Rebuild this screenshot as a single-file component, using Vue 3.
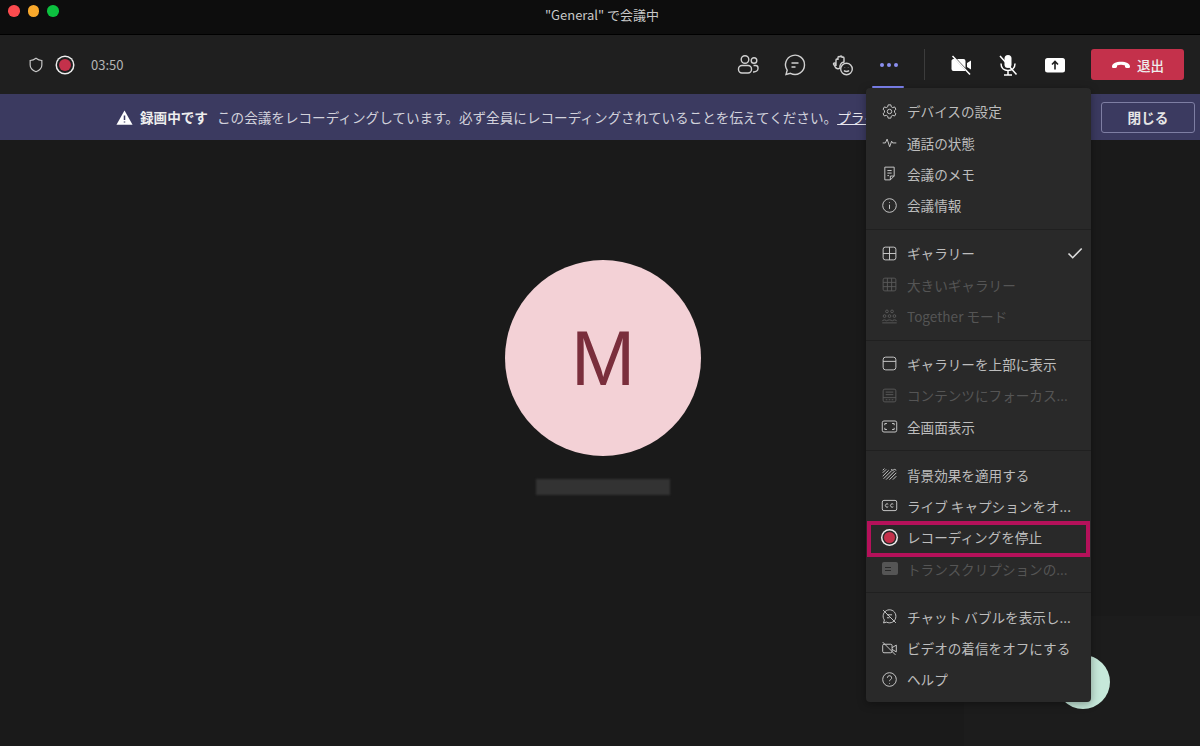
<script setup>
const ic = {
  gear: '<circle cx="10" cy="10" r="2.6"/><path d="M8.4 2.2h3.2l.5 2.3 1.7.9 2.2-.8 1.6 2.8-1.7 1.5v2.1l1.7 1.6-1.6 2.7-2.2-.8-1.7 1-.5 2.3H8.4l-.5-2.3-1.7-1-2.2.8-1.6-2.7 1.7-1.6V8.9L2.4 7.4 4 4.6l2.2.8 1.7-.9z"/>',
  pulse: '<path d="M2 10.5h3.2l2-4.5 3 9 2.3-6.5 1.2 2h4.3"/>',
  note: '<path d="M4.5 2.5h11v10.5l-4.5 4.5H4.5z"/><path d="M15.5 13H11v4.5M7.5 6.5h5M7.5 9.5h5M7.5 12.5h2"/>',
  info: '<circle cx="10" cy="10" r="8"/><path d="M10 9v5M10 6v.9"/>',
  gallery: '<rect x="2.5" y="2.5" width="15" height="15" rx="2.5"/><path d="M10 2.5v15M2.5 10h15"/>',
  large: '<rect x="2.5" y="2.5" width="15" height="15" rx="2"/><path d="M7.5 2.5v15M12.5 2.5v15M2.5 7.5h15M2.5 12.5h15"/>',
  together: '<circle cx="7" cy="4" r="1.6"/><circle cx="13" cy="4" r="1.6"/><circle cx="4.2" cy="9.5" r="1.6"/><circle cx="10" cy="9.5" r="1.6"/><circle cx="15.8" cy="9.5" r="1.6"/><path d="M1.5 15.5c0-2 5-2 5 0 0-2 6.800-2 6.800 0 0-2 5.200-2 5.200 0M1.500 17.500h17"/>',
  top: '<rect x="2.5" y="2.500" width="15" height="15" rx="3"/><path d="M2.500 7.500h15"/>',
  focus: '<rect x="2.500" y="2.500" width="15" height="15" rx="2"/><path d="M2.500 12.500h15M5.500 6h9M5.500 9h9M5.500 15h2M9 15h2M12.500 15h2"/>',
  full: '<rect x="1.500" y="3.500" width="17" height="13" rx="2"/><path d="M4.500 8.500v-2h2.500M13 6.500h2.500v2M15.500 11.500v2H13M7 13.500H4.500v-2"/>',
  bg: '<path d="M2 8l4-4M2 12l7-7M3 15l10-10M6 16l10-10M10 16l8-8M14 16l4-4M2 5l2-2M12 4l2 1 2-1 2 1"/>',
  cc: '<rect x="1.500" y="4" width="17" height="12" rx="2"/><path d="M8.500 8.500a2 2 0 1 0 0 3M14.500 8.500a2 2 0 1 0 0 3"/>',
  bubble: '<path d="M17.500 10a7.500 7.500 0 0 1-11 6.600l-3.500 1 1-3.500A7.500 7.500 0 1 1 17.500 10z"/><path d="M2.500 2.500l15 15M7 8h6M7 11.500h3"/>',
  video: '<rect x="2" y="5" width="11" height="10" rx="1.500"/><path d="M13 9l5-3v8l-5-3M2 2.500l15 15"/>',
  help: '<circle cx="10" cy="10" r="8"/><path d="M7.500 8a2.500 2.500 0 1 1 3.700 2.200c-.8.500-1.200 1-1.200 1.800M10 14.200v.8"/>'
}

const groups = [
  [
    { label: "デバイスの設定", icon: "gear" },
    { label: "通話の状態", icon: "pulse" },
    { label: "会議のメモ", icon: "note" },
    { label: "会議情報", icon: "info" }
  ],
  [
    { label: "ギャラリー", icon: "gallery", checked: true },
    { label: "大きいギャラリー", icon: "large", off: true },
    { label: "Together モード", icon: "together", off: true }
  ],
  [
    { label: "ギャラリーを上部に表示", icon: "top" },
    { label: "コンテンツにフォーカス...", icon: "focus", off: true },
    { label: "全画面表示", icon: "full" }
  ],
  [
    { label: "背景効果を適用する", icon: "bg" },
    { label: "ライブ キャプションをオ...", icon: "cc" },
    { label: "レコーディングを停止", rec: true },
    { label: "トランスクリプションの...", transcript: true, off: true }
  ],
  [
    { label: "チャット バブルを表示し...", icon: "bubble" },
    { label: "ビデオの着信をオフにする", icon: "video" },
    { label: "ヘルプ", icon: "help" }
  ]
]
</script>

<template>
  <div class="window">
    <header class="titlebar">
      <div class="lights">
        <span class="light red"></span>
        <span class="light yellow"></span>
        <span class="light green"></span>
      </div>
      <div class="title">"General" で会議中</div>
    </header>

    <div class="toolbar">
      <svg class="shield" viewBox="0 0 20 20" width="18" height="18">
        <path d="M10 2.500c2 1.500 4 2.300 6.500 2.500v5c0 3.500-2.500 6-6.500 7.500-4-1.500-6.500-4-6.500-7.500V5C6 4.800 8 4 10 2.500z" />
      </svg>
      <span class="rec-dot"></span>
      <span class="time">03:50</span>

      <div class="tools">
        <button class="tool">
          <svg viewBox="0 0 24 24" width="24" height="24">
            <circle cx="9" cy="6.500" r="3.800" /><circle cx="18" cy="7.500" r="2.800" />
            <rect x="2.500" y="12.500" width="13" height="7.500" rx="3.500" />
            <path d="M17.500 12.500h2.200a2.300 2.300 0 0 1 2.300 2.300v.7c0 2-2 3.500-4.500 3.500h-.5" />
          </svg>
        </button>
        <button class="tool">
          <svg viewBox="0 0 24 24" width="24" height="24">
            <path d="M21.500 12a9.500 9.500 0 0 1-14 8.300L3 21.500l1.200-4.400A9.500 9.500 0 1 1 21.500 12z" />
            <path d="M8.500 10h7M8.500 14h4" />
          </svg>
        </button>
        <button class="tool">
          <svg viewBox="0 0 24 24" width="24" height="24">
            <path d="M6 13V7a1 1 0 0 1 2 0V4.500a1 1 0 0 1 2 0V4a1 1 0 0 1 2 0v1a1 1 0 0 1 2 0v4c-3 .5-4.500 3-4 6-1 1-3.500 1-4.500-.5L3.500 11a1 1 0 0 1 1.500-1z" />
            <circle cx="16.500" cy="16" r="5.800" />
            <path d="M14 17.500c1.200 1.400 3.800 1.400 5 0M14.700 14.200v.3M18.300 14.200v.3" />
          </svg>
        </button>
        <button class="tool active">
          <span class="dots"><i></i><i></i><i></i></span>
        </button>
        <span class="divider"></span>
        <button class="tool solid">
          <svg viewBox="0 0 24 24" width="24" height="24">
            <path d="M2.500 7.500a2 2 0 0 1 2-1.500h1.200l10.800 11.500a2 2 0 0 1-1.500.5H4.500a2 2 0 0 1-2-2z M8 6h6.500a2 2 0 0 1 2 2v7z M18 10l4-2.500v9L18 14z" />
            <path class="cut" d="M3.500 3l17.500 18.500" />
          </svg>
        </button>
        <button class="tool solid">
          <svg viewBox="0 0 24 24" width="24" height="24">
            <rect x="8.500" y="2" width="7" height="13" rx="3.500" />
            <path class="cut" d="M5 10.500c0 4.500 3 7 7 7s7-2.500 7-7M12 17.500V22M8 22h8M4 3l16.500 18.500" />
          </svg>
        </button>
        <button class="tool solid">
          <svg viewBox="0 0 24 24" width="24" height="24">
            <rect x="2" y="5" width="20" height="14.500" rx="2.500" />
            <path class="dark" d="M12 16.500V9M9 11.500L12 8.500l3 3" />
          </svg>
        </button>
        <button class="leave">
          <svg viewBox="0 0 20 20" width="20" height="20">
            <path d="M1 11.500C1 8.500 5 6.800 10 6.800s9 1.700 9 4.700c0 1-.6 1.500-1.500 1.500h-2c-.9 0-1.500-.5-1.500-1.400v-1C12.700 10 11.400 9.800 10 9.800s-2.700.2-4 .8v1c0 .9-.6 1.400-1.500 1.400h-2C1.600 13 1 12.500 1 11.500z" />
          </svg>
          退出
        </button>
      </div>
    </div>

    <div class="banner">
      <svg class="warn" viewBox="0 0 20 20" width="17" height="17">
        <path d="M10 1.800L19.500 18.500H.5z" />
        <path class="mark" d="M10 7.500v5.500M10 14.600v1.400" />
      </svg>
      <strong>録画中です</strong>
      <span class="notice">
        この会議をレコーディングしています。必ず全員にレコーディングされていることを伝えてください。<a>プライバシー ポリシー</a>
      </span>
      <button class="close">閉じる</button>
    </div>

    <main class="stage">
      <div class="avatar">M</div>
      <div class="name"></div>
      <div class="side-panel"></div>
      <div class="fab"></div>
    </main>

    <div class="menu">
      <div v-for="(group, i) in groups" :key="i" class="group">
        <div
          v-for="item in group"
          :key="item.label"
          class="row"
          :class="{ off: item.off, marked: item.rec }"
        >
          <span v-if="item.rec" class="rec-dot small"></span>
          <span v-else-if="item.transcript" class="transcript"><i></i><i></i></span>
          <svg v-else class="row-icon" viewBox="0 0 20 20" width="17" height="17" v-html="ic[item.icon]"></svg>
          <span class="label">{{ item.label }}</span>
          <svg v-if="item.checked" class="check" viewBox="0 0 16 16" width="16" height="16">
            <path d="M1.500 8.500l4.200 4.200 9-9.200" />
          </svg>
        </div>
      </div>
    </div>
  </div>
</template>

<style scoped>
.window {
  position: relative;
  display: flex;
  flex-direction: column;
  width: 1200px;
  height: 746px;
  overflow: hidden;
  background: #1a1a1a;
  font-family: "Noto Sans CJK JP", "Liberation Sans", sans-serif;
  color: #d0d0d0;
}

.titlebar {
  position: relative;
  display: flex;
  flex: none;
  align-items: center;
  justify-content: center;
  height: 35px;
  padding: 0 0 5px 4px;
  box-sizing: border-box;
  background: #0d0d0d;
  border-bottom: 1px solid #000;
}
.title {
  font-size: 13px;
  color: #c8c8c8;
}
.lights {
  position: absolute;
  left: 8px;
  top: 5px;
  display: flex;
  gap: 8px;
}
.light {
  width: 11.500px;
  height: 11.500px;
  border-radius: 50%;
}
.red { background: #fb4b4e; }
.yellow { background: #f9a92c; }
.green { background: #0cc13f; }

.toolbar {
  display: flex;
  flex: none;
  align-items: center;
  height: 59px;
  padding: 0 16px 0 27px;
  box-sizing: border-box;
  background: #1f1f1f;
}
.shield {
  fill: none;
  stroke: #c8c8c8;
  stroke-width: 1.300;
}
.rec-dot {
  flex: none;
  width: 12px;
  height: 12px;
  margin-left: 14px;
  box-sizing: border-box;
  border-radius: 50%;
  background: #c4314b;
  box-shadow: 0 0 0 2px #1f1f1f, 0 0 0 3.500px #eee;
  margin-right: 0;
}
.time {
  margin-left: 20px;
  font-family: "Noto Sans CJK JP", "Liberation Sans", sans-serif;
  font-size: 13px;
  color: #b4b4b4;
}
.tools {
  display: flex;
  align-items: center;
  margin-left: auto;
}
.tool {
  position: relative;
  display: flex;
  align-items: center;
  justify-content: center;
  width: 47px;
  height: 46px;
  padding: 0;
  border: 0;
  background: none;
}
.tool svg {
  fill: none;
  stroke: #d0d0d0;
  stroke-width: 1.400;
}
.tool.solid svg {
  fill: #fff;
  stroke: none;
}
.tool.solid .cut {
  fill: none;
  stroke: #fff;
  stroke-width: 1.500;
}
.tool.solid .dark {
  fill: none;
  stroke: #1f1f1f;
  stroke-width: 1.600;
}
.tool.active::after {
  content: "";
  position: absolute;
  left: 7px;
  right: 8px;
  bottom: 0;
  height: 2px;
  background: #7f85f5;
  border-radius: 2px;
}
.dots {
  display: flex;
  gap: 3px;
}
.dots i {
  width: 4px;
  height: 4px;
  border-radius: 50%;
  background: #8b8ff0;
}
.divider {
  width: 1px;
  height: 31px;
  margin: 0 12px;
  background: #3c3c3c;
}
.leave {
  display: flex;
  align-items: center;
  justify-content: center;
  gap: 6px;
  width: 93px;
  height: 31px;
  margin-left: 13px;
  padding: 0;
  border: 0;
  border-radius: 3px;
  background: #c4314b;
  font: 500 13.500px "Noto Sans CJK JP", sans-serif;
  color: #eee;
}
.leave svg {
  fill: #fff;
}

.banner {
  display: flex;
  flex: none;
  align-items: center;
  height: 46px;
  padding: 0 5px 0 116px;
  box-sizing: border-box;
  background: #3b3a60;
  font-size: 13.600px;
  white-space: nowrap;
}
.warn {
  flex: none;
  fill: #fff;
}
.warn .mark {
  fill: none;
  stroke: #3b3a60;
  stroke-width: 1.800;
}
.banner strong {
  margin-left: 7px;
  font-weight: 700;
  color: #eee;
}
.notice {
  flex: 1;
  margin-left: 9px;
  overflow: hidden;
  color: #d2d2dc;
}
.notice a {
  color: #e6e6ee;
  text-decoration: underline;
}
.close {
  flex: none;
  width: 94px;
  height: 31px;
  padding: 0;
  border: 1px solid #7e7ea3;
  border-radius: 3px;
  background: none;
  font: 700 13.600px "Noto Sans CJK JP", sans-serif;
  color: #e6e6e6;
}

.stage {
  position: relative;
  flex: 1;
  display: flex;
  flex-direction: column;
  align-items: center;
  padding: 120px 0 0 6px;
  background: #1a1a1a;
}
.avatar {
  display: flex;
  align-items: center;
  justify-content: center;
  width: 196px;
  height: 196px;
  border-radius: 50%;
  background: #f3d1d6;
  font: 400 77px "Liberation Sans", sans-serif;
  color: #7a2e3c;
}
.name {
  width: 134px;
  height: 16px;
  margin-top: 23px;
  background: #333;
  filter: blur(1px);
}
.side-panel {
  position: absolute;
  left: 964px;
  right: 0;
  top: 476px;
  bottom: 0;
  background: #1c1c1c;
}
.fab {
  position: absolute;
  left: 1056px;
  top: 515px;
  width: 54px;
  height: 54px;
  border-radius: 50%;
  background: #c6e8da;
}

.menu {
  position: absolute;
  left: 866px;
  top: 88px;
  width: 225px;
  height: 614px;
  border-radius: 4px;
  background: #292929;
  box-shadow: 0 2px 8px rgba(0, 0, 0, 0.35);
}
.group {
  padding: 7.500px 0 8px;
  border-top: 1px solid #202020;
}
.group:first-child {
  border-top: 0;
}
.row {
  position: relative;
  display: flex;
  align-items: center;
  height: 31.400px;
  padding-left: 15px;
  font-size: 13.600px;
  color: #bdbdbd;
  white-space: nowrap;
}
.row.off {
  color: #555;
}
.row-icon {
  flex: none;
  fill: none;
  stroke: #cfcfcf;
  stroke-width: 1.100;
}
.row.off .row-icon {
  stroke: #5a5a5a;
}
.label {
  margin-left: 9px;
}
.check {
  position: absolute;
  right: 8px;
  fill: none;
  stroke: #ddd;
  stroke-width: 1.600;
}
.rec-dot.small {
  width: 11px;
  height: 11px;
  margin: 0 3px 0 3px;
  box-shadow: 0 0 0 1.500px #292929, 0 0 0 3px #eee;
}
.transcript {
  display: flex;
  flex: none;
  flex-direction: column;
  gap: 2px;
  justify-content: center;
  width: 16px;
  height: 13px;
  margin: 0 .500px;
  padding-left: 3px;
  box-sizing: border-box;
  border-radius: 2px;
  background: #555;
}
.transcript i {
  width: 6px;
  height: 1px;
  background: #292929;
}
.marked::after {
  content: "";
  position: absolute;
  left: 1px;
  right: 1px;
  top: -1px;
  bottom: -4px;
  border: 4px solid #b5115a;
  pointer-events: none;
}
</style>

<style>
button {
  font-family: inherit;
}
</style>
